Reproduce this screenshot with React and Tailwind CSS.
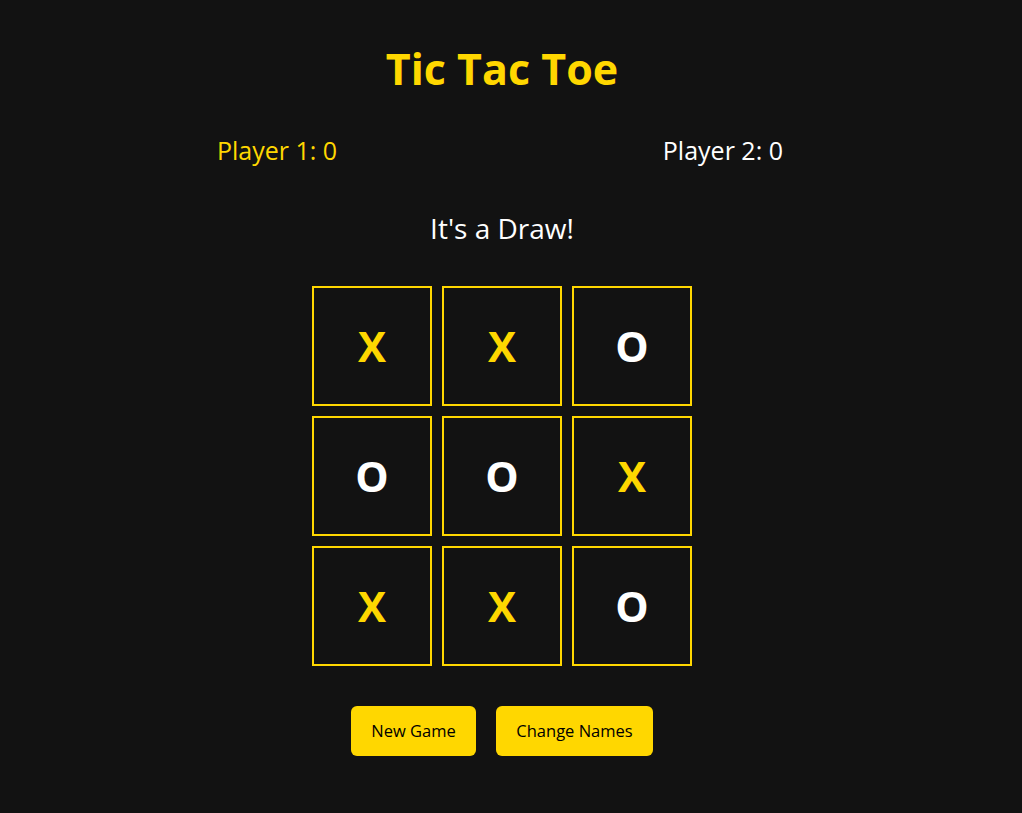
import { useState } from 'react';

const initialBoard = ['X', 'X', 'O', 'O', 'O', 'X', 'X', 'X', 'O'];

export default function App() {
    const [board] = useState(initialBoard);

    return (
        <div className="min-h-screen bg-[#121212] text-white" style={{ fontFamily: '"Open Sans", "Noto Sans", sans-serif' }}>
            <div className="w-[1004px] flex flex-col items-center">
                <h1 className="mt-[44px] text-[43px] leading-[50px] font-bold text-[#FFD700]">Tic Tac Toe</h1>

                {/* Scores */}
                <div className="mt-[39px] w-[566px] flex justify-between text-[25px] leading-[34px] -translate-x-[2px]">
                    <span className="text-[#FFD700]">Player 1: 0</span>
                    <span className="text-white">Player 2: 0</span>
                </div>

                <div className="mt-[42px] text-[28px] leading-[38px]">It's a Draw!</div>

                {/* Board */}
                <div className="mt-[39px] grid grid-cols-3 gap-[10px]">
                    {board.map((cell, i) => (
                        <div
                            key={i}
                            className="w-[120px] h-[120px] border-2 border-[#FFD700] flex items-center justify-center"
                        >
                            <span className={`text-[42px] font-bold leading-none ${cell === 'X' ? 'text-[#FFD700]' : 'text-white'}`}>{cell}</span>
                        </div>
                    ))}
                </div>

                <div className="mt-[40px] flex gap-[20px]">
                    <button className="h-[50px] w-[125px] rounded-md bg-[#FFD700] text-black text-[16.5px]">New Game</button>
                    <button className="h-[50px] w-[157px] rounded-md bg-[#FFD700] text-black text-[16.5px]">Change Names</button>
                </div>
            </div>
        </div>
    );
}
